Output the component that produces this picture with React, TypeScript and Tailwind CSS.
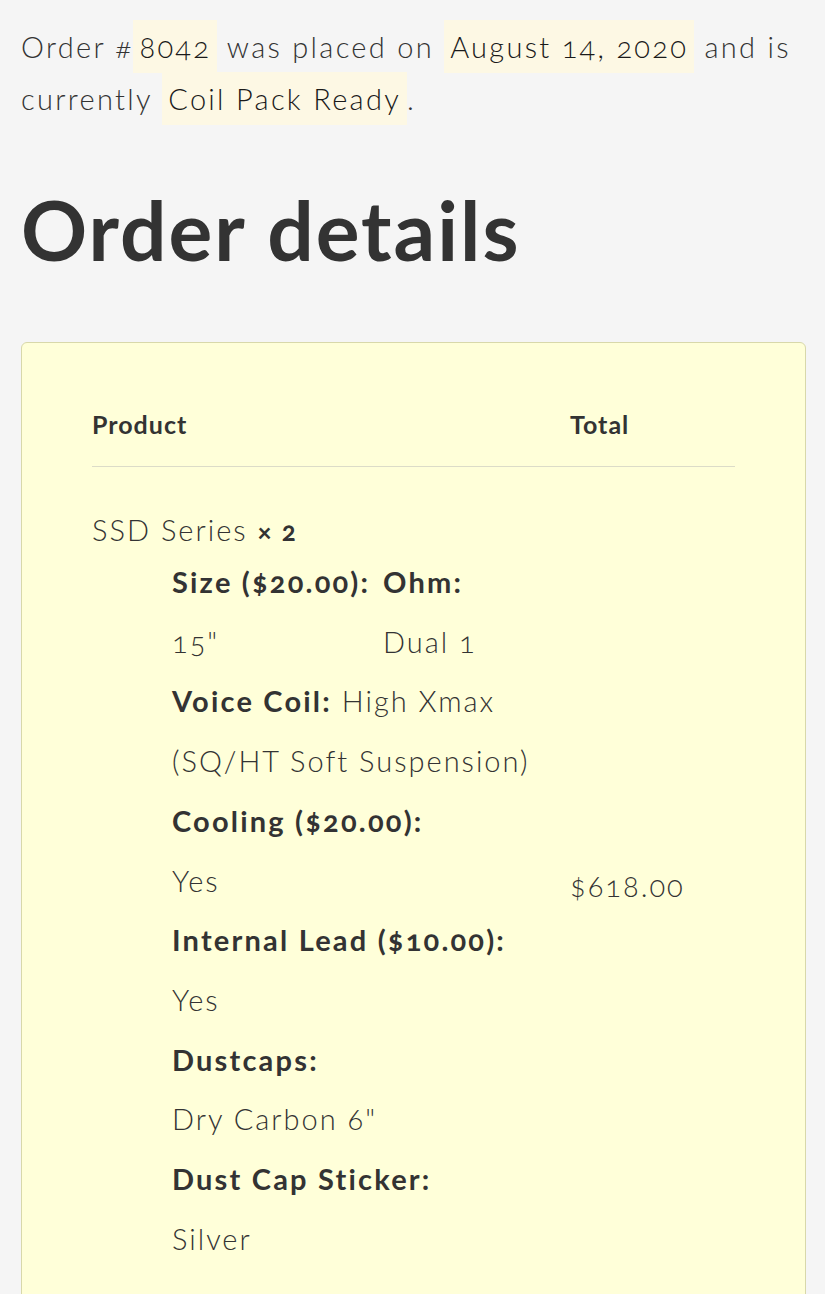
import React from 'react';

const font = { fontFamily: 'Lato, "Noto Sans", sans-serif' };

function Mark({ children }: { children: React.ReactNode }) {
  return <mark className="bg-[#fdf8e4] px-[6px] py-[9px] text-[#1a1a1a]">{children}</mark>;
}

function Label({ children }: { children: React.ReactNode }) {
  return <strong className="font-bold tracking-[2.2px]">{children}</strong>;
}

export default function App() {
  return (
    <div className="min-h-screen bg-[#f5f5f5] text-[#333] px-[21px] pt-[21px] oldstyle-nums" style={font}>
      <p className="text-[29px] leading-[52px] font-light tracking-[2.3px]">
        Order #<Mark>8042</Mark> was placed on <Mark>August 14, 2020</Mark> and is currently{' '}
        <Mark>Coil Pack Ready</Mark>.
      </p>

      <h2 className="mt-[56px] text-[82px] leading-[96px] font-bold tracking-[2px]">Order details</h2>

      <div className="mt-[65px] mr-[-2px] rounded-[6px] border border-[#d8d8aa] bg-[#ffffd9] px-[70px] pt-[59px] pb-[80px]">
        <div className="flex border-b border-[#dcdcc8] pb-[20px] text-[25px] leading-[44px] font-bold tracking-[1px]">
          <div className="w-[478px]">Product</div>
          <div className="flex-1">Total</div>
        </div>

        <div className="flex items-center pt-[37px] text-[29px] font-light tracking-[2px]">
          <div className="w-[478px]">
            <div className="leading-[52px]">
              SSD Series <strong className="font-bold text-[26px]">× 2</strong>
            </div>
            <div className="ml-[80px] -mt-[5px] leading-[59.7px]">
              <div className="grid grid-cols-[211px_auto]">
                <Label>Size ($20.00):</Label>
                <Label>Ohm:</Label>
                <span>15"</span>
                <span>Dual 1</span>
              </div>
              <div>
                <Label>Voice Coil:</Label> High Xmax
              </div>
              <div>(SQ/HT Soft Suspension)</div>
              <div>
                <Label>Cooling ($20.00):</Label>
              </div>
              <div>Yes</div>
              <div>
                <Label>Internal Lead ($10.00):</Label>
              </div>
              <div>Yes</div>
              <div>
                <Label>Dustcaps:</Label>
              </div>
              <div>Dry Carbon 6"</div>
              <div>
                <Label>Dust Cap Sticker:</Label>
              </div>
              <div>Silver</div>
            </div>
          </div>
          <div className="flex-1">$618.00</div>
        </div>
      </div>
    </div>
  );
}
